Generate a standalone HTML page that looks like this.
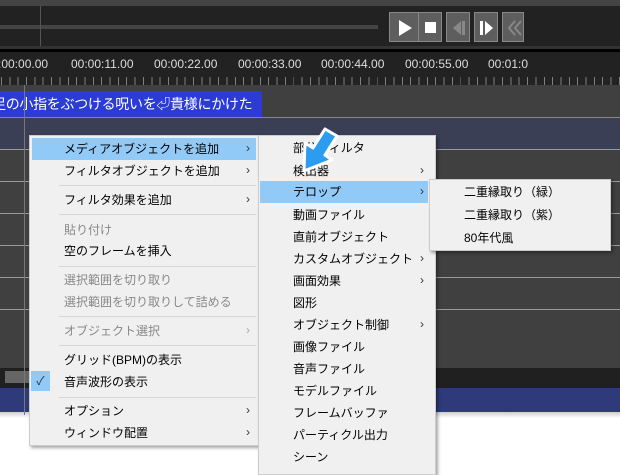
<!DOCTYPE html>
<html><head><meta charset="utf-8"><style>
*{margin:0;padding:0;box-sizing:border-box}
body{width:620px;height:468px;overflow:hidden;background:#fff;position:relative;font-family:"Liberation Sans","Noto Sans CJK JP",sans-serif;font-size:12px}
.a{position:absolute}
.menu{position:absolute;background:#f0f0f0;border:1px solid #ccc;box-shadow:2px 2px 3px rgba(0,0,0,.35)}
.it{position:absolute;left:0;right:0;height:22px;line-height:22px;color:#000;white-space:nowrap}
.dis{color:#888}
.hl{background:#91c9f7}
.sep{position:absolute;height:1px;background:#d5d5d5}
.ar{position:absolute;font-size:12px;color:#333}
.lab{position:absolute;top:57px;color:#ddd;font-size:12px}
.btn{position:absolute;top:12px;width:24px;height:30px;background:#5e5e5e;border:1px solid #888}
</style></head><body>
<div class="a" style="left:0;top:0;width:620px;height:6px;background:#444"></div>
<div class="a" style="left:0;top:6px;width:620px;height:40px;background:#222"></div>
<div class="a" style="left:0;top:25px;width:378px;height:4px;background:#444"></div>
<div class="a" style="left:40px;top:6px;width:1px;height:40px;background:#555"></div>
<div class="a" style="left:0;top:46px;width:620px;height:6px;background:#333"></div>
<div class="a" style="left:0;top:49px;width:620px;height:3px;background:#000"></div>
<div class="btn" style="left:389px;width:31px"><svg width="31" height="30"><path d="M9 7 L22 15 L9 23Z" fill="#fff"/></svg></div>
<div class="btn" style="left:418px"><div class="a" style="left:6px;top:9px;width:11px;height:11px;background:#fff"></div></div>
<div class="btn" style="left:446px"><svg width="24" height="30"><path d="M14 8 L6 15 L14 22Z" fill="#888"/><rect x="15" y="8" width="3" height="14" fill="#888"/></svg></div>
<div class="btn" style="left:474px"><svg width="24" height="30"><rect x="5" y="8" width="3" height="14" fill="#fff"/><path d="M10 8 L18 15 L10 22Z" fill="#fff"/></svg></div>
<div class="btn" style="left:502px;width:22px"><svg width="22" height="30"><path d="M12 8 L6 15 L12 22 M18 8 L12 15 L18 22" stroke="#888" stroke-width="2" fill="none"/></svg></div>
<div class="a" style="left:0;top:52px;width:620px;height:34px;background:#222"></div>
<div class="lab" style="left:-2px">:00:00.00</div><div class="lab" style="left:71px">00:00:11.00</div><div class="lab" style="left:154px">00:00:22.00</div><div class="lab" style="left:238px">00:00:33.00</div><div class="lab" style="left:321px">00:00:44.00</div><div class="lab" style="left:405px">00:00:55.00</div><div class="lab" style="left:488px">00:01:0</div>
<div class="a" style="left:0;top:77px;width:620px;height:8px;background:repeating-linear-gradient(90deg,transparent 0 1px,#888 1px 2px,transparent 2px 8.35px);opacity:.9"></div>
<div class="a" style="left:0;top:85px;width:620px;height:32px;background:#404040"></div>
<div class="a" style="left:0;top:91px;width:262px;height:26px;background:#2b3bd3;color:#fff;font-size:14px;line-height:26px;white-space:nowrap;overflow:hidden"><span style="position:absolute;left:-8px;letter-spacing:-0.3px">足の小指をぶつける呪いを⏎貴様にかけた</span></div>
<div class="a" style="left:0;top:117px;width:620px;height:1px;background:#888"></div>
<div class="a" style="left:0;top:118px;width:620px;height:31px;background:#3b3f55"></div>
<div class="a" style="left:0;top:149px;width:620px;height:192px;background:#404040"></div>
<div class="a" style="left:0;top:149px;width:620px;height:1px;background:#999"></div>
<div class="a" style="left:0;top:181px;width:620px;height:1px;background:#999"></div>
<div class="a" style="left:0;top:213px;width:620px;height:1px;background:#999"></div>
<div class="a" style="left:0;top:245px;width:620px;height:1px;background:#999"></div>
<div class="a" style="left:0;top:277px;width:620px;height:1px;background:#999"></div>
<div class="a" style="left:0;top:309px;width:620px;height:1px;background:#999"></div>
<div class="a" style="left:0;top:341px;width:620px;height:27px;background:#404040"></div>
<div class="a" style="left:0;top:368px;width:620px;height:20px;background:#202020"></div>
<div class="a" style="left:5px;top:371px;width:50px;height:12px;background:#666"></div>
<div class="a" style="left:0;top:388px;width:620px;height:24px;background:#2e3a7a"></div>
<div class="a" style="left:0;top:412px;width:620px;height:6px;background:linear-gradient(#ccc,#fff)"></div>
<div class="a" style="left:24px;top:85px;width:1px;height:330px;background:#777"></div>

<div class="menu" style="left:29px;top:135px;width:230px;height:311px">
<div class="it hl" style="top:2px;left:2px;right:2px;padding-left:32px">メディアオブジェクトを追加</div><span class="ar" style="left:216px;top:5px">›</span>
<div class="it" style="top:24px;padding-left:34px">フィルタオブジェクトを追加</div><span class="ar" style="left:216px;top:27px">›</span>
<div class="sep" style="left:29px;right:2px;top:49px"></div>
<div class="it" style="top:53px;padding-left:34px">フィルタ効果を追加</div><span class="ar" style="left:216px;top:56px">›</span>
<div class="sep" style="left:29px;right:2px;top:78px"></div>
<div class="it dis" style="top:83px;padding-left:34px">貼り付け</div>
<div class="it" style="top:104px;padding-left:34px">空のフレームを挿入</div>
<div class="sep" style="left:29px;right:2px;top:130px"></div>
<div class="it dis" style="top:133px;padding-left:34px">選択範囲を切り取り</div>
<div class="it dis" style="top:155px;padding-left:34px">選択範囲を切り取りして詰める</div>
<div class="sep" style="left:29px;right:2px;top:180px"></div>
<div class="it dis" style="top:184px;padding-left:34px">オブジェクト選択</div><span class="ar" style="left:216px;top:187px;color:#aaa">›</span>
<div class="sep" style="left:29px;right:2px;top:209px"></div>
<div class="it" style="top:213px;padding-left:34px">グリッド(BPM)の表示</div>
<div class="a hl" style="left:1px;top:235px;width:19px;height:20px;text-align:center;line-height:20px;color:#333">✓</div>
<div class="it" style="top:235px;padding-left:34px">音声波形の表示</div>
<div class="sep" style="left:29px;right:2px;top:261px"></div>
<div class="it" style="top:264px;padding-left:34px">オプション</div><span class="ar" style="left:216px;top:267px">›</span>
<div class="it" style="top:286px;padding-left:34px">ウィンドウ配置</div><span class="ar" style="left:216px;top:289px">›</span>
</div>

<div class="menu" style="left:258px;top:135px;width:178px;height:340px">
<div class="it" style="top:1px;padding-left:34px">部分フィルタ</div>
<div class="it" style="top:24px;padding-left:34px">検出器</div><span class="ar" style="left:161px;top:27px">›</span>
<div class="it hl" style="top:45px;left:1px;right:7px;padding-left:33px">テロップ</div><span class="ar" style="left:161px;top:48px">›</span>
<div class="it" style="top:68px;padding-left:34px">動画ファイル</div>
<div class="it" style="top:90px;padding-left:34px">直前オブジェクト</div>
<div class="it" style="top:112px;padding-left:34px">カスタムオブジェクト</div><span class="ar" style="left:161px;top:115px">›</span>
<div class="it" style="top:134px;padding-left:34px">画面効果</div><span class="ar" style="left:161px;top:137px">›</span>
<div class="it" style="top:156px;padding-left:34px">図形</div>
<div class="it" style="top:178px;padding-left:34px">オブジェクト制御</div><span class="ar" style="left:161px;top:181px">›</span>
<div class="it" style="top:200px;padding-left:34px">画像ファイル</div>
<div class="it" style="top:222px;padding-left:34px">音声ファイル</div>
<div class="it" style="top:244px;padding-left:34px">モデルファイル</div>
<div class="it" style="top:266px;padding-left:34px">フレームバッファ</div>
<div class="it" style="top:288px;padding-left:34px">パーティクル出力</div>
<div class="it" style="top:310px;padding-left:34px">シーン</div>
</div>

<div class="menu" style="left:429px;top:179px;width:182px;height:72px">
<div class="it" style="top:1px;padding-left:34px">二重縁取り（緑）</div>
<div class="it" style="top:24px;padding-left:34px">二重縁取り（紫）</div>
<div class="it" style="top:47px;padding-left:34px">80年代風</div>
</div>

<svg class="a" style="left:295px;top:124px" width="50" height="52"><path d="M30 5 L42 12 L30 31 L37 36 L9 47 L10 19 L18 24 Z" fill="#2b9cf0" stroke="#fff" stroke-width="3" stroke-linejoin="round"/></svg>
</body></html>
